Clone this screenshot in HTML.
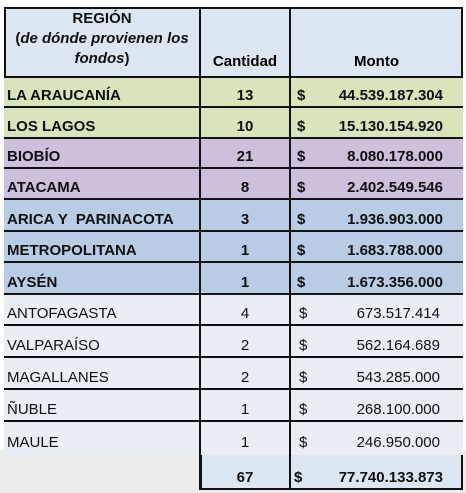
<!DOCTYPE html><html><head><style>
body{margin:0;width:466px;height:493px;background:#fff;position:relative;overflow:hidden;font-family:"Liberation Sans",sans-serif;}
.bg{position:absolute;left:0;top:450px;width:466px;height:43px;background:#ececec}
.r{position:absolute;left:4px;width:459px;border-top:2px solid #111;box-sizing:border-box}
.c{position:absolute;bottom:4px;font-size:15px;color:#111;white-space:pre}
.v{position:absolute;top:7px;width:2px;background:#111}
</style></head><body>
<div class="bg"></div>
<div style="position:absolute;left:4px;top:7px;width:459px;height:446px;border:2px solid #111;box-sizing:border-box;background:#e9edf4"></div>
<div style="position:absolute;left:6px;top:9px;width:194px;height:67px;background:#dce6f1"></div>
<div style="position:absolute;left:200px;top:9px;width:261px;height:67px;background:#dce6f1"></div>
<div style="position:absolute;left:200px;top:453px;width:263px;height:37px;background:#dce6f1;border:2px solid #111;box-sizing:border-box"></div>
<div style="position:absolute;left:4px;top:9px;width:196px;text-align:center;font-size:15px;font-weight:bold;line-height:20px;color:#111">REGIÓN<br>(<i>de dónde provienen los fondos</i>)</div>
<div style="position:absolute;left:200px;top:53px;width:90px;text-align:center;font-size:15px;font-weight:bold">Cantidad</div>
<div style="position:absolute;left:290px;top:53px;width:173px;text-align:center;font-size:15px;font-weight:bold">Monto</div>
<div id="rows"></div>
<script>
var d=[["LA ARAUCANÍA","13","44.539.187.304","#d8e4bc",1],["LOS LAGOS","10","15.130.154.920","#d8e4bc",1],["BIOBÍO","21","8.080.178.000","#ccc0da",1],["ATACAMA","8","2.402.549.546","#ccc0da",1],["ARICA Y  PARINACOTA","3","1.936.903.000","#b8cce4",1],["METROPOLITANA","1","1.683.788.000","#b8cce4",1],["AYSÉN","1","1.673.356.000","#b8cce4",1],["ANTOFAGASTA","4","673.517.414","#e9edf4",0],["VALPARAÍSO","2","562.164.689","#e9edf4",0],["MAGALLANES","2","543.285.000","#e9edf4",0],["ÑUBLE","1","268.100.000","#e9edf4",0],["MAULE","1","246.950.000","#e9edf4",0]];
var t=[76,106,137,167,198,230,261,293,324,356,388,420,453];
var h="";
for(var i=0;i<d.length;i++){var r=d[i],w=r[4]?"bold":"normal";
h+='<div class="r" style="top:'+t[i]+'px;height:'+(t[i+1]-t[i]+2)+'px;background:'+r[3]+';font-weight:'+w+'">'+
'<span class="c" style="left:3px">'+r[0]+'</span><span class="c" style="left:196px;width:90px;text-align:center">'+r[1]+'</span><span class="c" style="left:'+(r[4]?293:295)+'px">$</span><span class="c" style="right:'+(r[4]?20:23)+'px">'+r[2]+'</span></div>';}
h+='<div class="c" style="left:200px;top:469px;width:90px;text-align:center;font-weight:bold;bottom:auto">67</div><div class="c" style="left:294px;top:469px;font-weight:bold;bottom:auto">$</div><div class="c" style="right:23px;top:469px;font-weight:bold;bottom:auto">77.740.133.873</div>';
h+='<div class="v" style="left:199px;height:483px"></div><div class="v" style="left:289px;height:483px"></div>';
document.getElementById("rows").innerHTML=h;
</script>
</body></html>
